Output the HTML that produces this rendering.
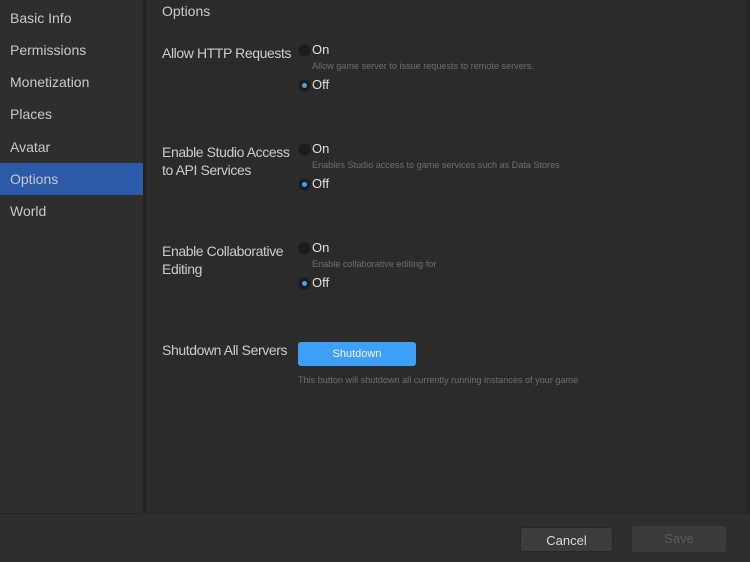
<!DOCTYPE html>
<html><head><style>
*{margin:0;padding:0;box-sizing:border-box}
body{width:750px;height:562px;background:#2e2e2e;font-family:"Liberation Sans",sans-serif;position:relative;overflow:hidden;color:#cccccc}
.side{position:absolute;left:0;top:0;width:143px;height:513px;background:#2e2e2e}
.side div{position:absolute;left:10px;font-size:14px;color:#c8c8c8;line-height:16px}
.sel{position:absolute;left:0;top:163px;width:143px;height:32px;background:#2b5aa8}
.div{position:absolute;left:143px;top:0;width:3px;height:513px;background:#232323}
.main{position:absolute;left:146px;top:0;width:599px;height:513px;background:#2b2b2b}
.sb{position:absolute;left:745px;top:0;width:5px;height:513px;background:#262626}
.bot{position:absolute;left:0;top:513px;width:750px;height:49px;background:#2e2e2e;border-top:1px solid #252525}
.t{position:absolute;font-size:14px;color:#cccccc;line-height:18px;letter-spacing:-0.4px}
.r{position:absolute;z-index:5;width:13px;height:13px;border-radius:50%;background:#1c1c1c;border:1px solid #222}
.r.on::after{content:"";position:absolute;left:3px;top:3px;width:5px;height:5px;border-radius:50%;background:#3ea2f8}
.o{position:absolute;font-size:13px;color:#e0e0e0;line-height:16px}
.h{position:absolute;font-size:9.1px;color:#6e6e6e;line-height:12px}
.btn{position:absolute;border-radius:3px;font-size:13px;text-align:center}
</style></head><body>
<div class="side">
<div style="top:10px">Basic Info</div>
<div style="top:42px">Permissions</div>
<div style="top:74px">Monetization</div>
<div style="top:106px">Places</div>
<div style="top:139px">Avatar</div>
</div>
<div class="sel"></div>
<div class="side" style="background:none"><div style="top:171px">Options</div><div style="top:203px">World</div></div>
<div class="div"></div>
<div class="main"></div>
<div class="sb"></div>
<div class="t" style="left:162px;top:2px;letter-spacing:0">Options</div>

<div class="t" style="left:162px;top:44px">Allow HTTP Requests</div>
<div class="r" style="left:298px;top:44px"></div><div class="o" style="left:312px;top:42px">On</div>
<div class="h" style="left:312px;top:60px">Allow game server to issue requests to remote servers.</div>
<div class="r on" style="left:298px;top:79px"></div><div class="o" style="left:312px;top:77px">Off</div>

<div class="t" style="left:162px;top:143px">Enable Studio Access<br>to API Services</div>
<div class="r" style="left:298px;top:143px"></div><div class="o" style="left:312px;top:141px">On</div>
<div class="h" style="left:312px;top:159px">Enables Studio access to game services such as Data Stores</div>
<div class="r on" style="left:298px;top:178px"></div><div class="o" style="left:312px;top:176px">Off</div>

<div class="t" style="left:162px;top:242px">Enable Collaborative<br>Editing</div>
<div class="r" style="left:298px;top:242px"></div><div class="o" style="left:312px;top:240px">On</div>
<div class="h" style="left:312px;top:258px">Enable collaborative editing for</div>
<div class="r on" style="left:298px;top:277px"></div><div class="o" style="left:312px;top:275px">Off</div>

<div class="t" style="left:162px;top:341px">Shutdown All Servers</div>
<div class="btn" style="left:298px;top:342px;width:118px;height:24px;line-height:24px;background:#3d9ff5;color:#f0f4fa;font-size:11px">Shutdown</div>
<div class="h" style="left:298px;top:374px">This button will shutdown all currently running instances of your game</div>

<div class="bot"></div>
<div class="btn" style="left:520px;top:527px;width:93px;height:25px;line-height:25px;background:#3c3c3c;color:#d8d8d8;border:1px solid #272727">Cancel</div>
<div class="btn" style="left:632px;top:526px;width:94px;height:26px;line-height:26px;background:#3a3a3a;color:#5c5c5c">Save</div>
</body></html>
